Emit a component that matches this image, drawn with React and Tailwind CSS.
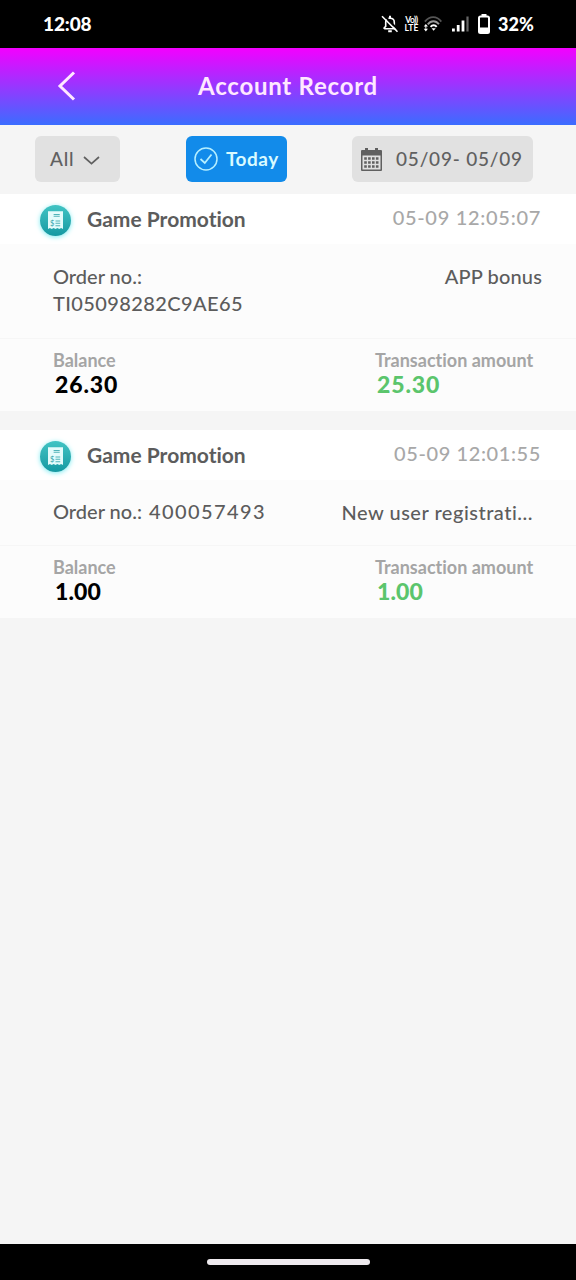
import React from 'react';

const records = [
    {
        title: 'Game Promotion',
        time: '05-09 12:05:07',
        timeClass: 'tracking-[0.7px]',
        orderNo: 'TI05098282C9AE65',
        orderClass: 'block tracking-[0.4px]',
        rowClass: 'h-[95px] pr-[34px]',
        remark: 'APP bonus',
        remarkClass: 'tracking-[0.15px]',
        balance: '26.30',
        balanceClass: 'tracking-[0.9px]',
        amount: '25.30',
    },
    {
        title: 'Game Promotion',
        time: '05-09 12:01:55',
        timeClass: 'tracking-[0.6px]',
        orderNo: '400057493',
        orderClass: 'ml-0.5 tracking-[1.4px]',
        rowClass: 'h-[66px] pr-[43px]',
        remark: 'New user registrati...',
        remarkClass: 'tracking-[0.5px]',
        balance: '1.00',
        balanceClass: 'tracking-[0.1px]',
        amount: '1.00',
    },
];

function StatusBar() {
    return (
        <div className="flex h-12 shrink-0 items-center justify-between bg-black pl-[43px] pr-[42px] text-white">
            <span className="text-[19px] font-black leading-6 tracking-[-0.1px]">12:08</span>
            <div className="flex items-center">
                <svg className="h-[18px] w-[18px]" viewBox="0 0 18 18" fill="none" stroke="#fff" strokeWidth="1.6">
                    <path d="M3.2 14V12.8L4.7 11.4V7.2C4.7 5 6.3 3.3 9 3.3S13.3 5 13.3 7.2V11.4L15 13.7H3.2Z" />
                    <path d="M9 .8V3M7.2 16.2H10.8" strokeWidth="2" />
                    <path d="M2.8 .2L18 15.600" stroke="#000" strokeWidth="2" />
                    <path d="M1 1.2L16.5 16.8" />
                </svg>
                <div className="ml-[5px] flex w-[15px] flex-col items-center text-[8.5px] font-bold leading-[8px]">
                    <span className="tracking-[-0.6px]">Vo))</span>
                    <span className="tracking-[0.1px]">LTE</span>
                </div>
                <svg className="ml-1 h-[18px] w-[19px]" viewBox="0 0 20 18" fill="none" strokeWidth="2">
                    <path d="M2 6.500C7 .2 14.500 .2 19.300 6.500" stroke="#555" />
                    <path d="M5 9.300C8.500 5 13.500 5 16.800 9.300" stroke="#999" />
                    <path d="M8 12C9.800 9.800 12.700 9.800 14.400 12" stroke="#fff" />
                    <path d="M11.200 16L9 13.500H13.400Z" fill="#fff" />
                    <path d="M3 9L5.200 11.700H.800ZM3 17L5.200 14H.800Z" fill="#fff" />
                    <path d="M3 11V14" stroke="#fff" strokeWidth="1" />
                </svg>
                <svg className="ml-2.5 h-4 w-[17px]" viewBox="0 0 17 16" fill="#fff">
                    <rect x="0" y="12.500" width="2.800" height="3" />
                    <rect x="4.800" y="9" width="2.800" height="6.500" />
                    <rect x="9.600" y="4.500" width="2.800" height="11" />
                    <rect x="14.400" y="0.500" width="2.200" height="15" fill="#666" />
                </svg>
                <svg className="ml-[9px] h-5 w-3" viewBox="0 0 12 20">
                    <rect x="3.500" y="0" width="5" height="3" fill="#fff" />
                    <rect x="1" y="2.500" width="10" height="16.500" rx="1.500" fill="none" stroke="#fff" strokeWidth="2" />
                    <rect x="1" y="13.500" width="10" height="5.500" fill="#fff" />
                </svg>
                <span className="ml-2 text-[18px] font-black leading-6 tracking-[0.1px]">32%</span>
            </div>
        </div>
    );
}

function Header() {
    return (
        <div className="grid h-[77px] shrink-0 grid-cols-[1fr_auto_1fr] items-center bg-linear-to-b/srgb from-[#f400ff] to-[#3b6dff] text-[#ffe8ff]">
            <svg className="mb-0.5 ml-[57px] h-[30px] w-[19px]" viewBox="0 0 19 30" fill="none" stroke="currentColor" strokeWidth="3">
                <path d="M17 1.500L3 15L17 28.500" />
            </svg>
            <h1 className="pb-px text-[24px] font-bold leading-7 tracking-[0.75px]">Account Record</h1>
        </div>
    );
}

function Filters() {
    return (
        <div className="flex h-[69px] shrink-0 items-start justify-between pl-[35px] pr-[43px] pt-[11px] leading-none">
            <button className="flex h-[46px] w-[85px] items-center rounded-md bg-[#e1e1e1] pl-[15px] text-[19px] font-medium text-[#606060]">
                <span className="w-[33px] pb-0.5 text-left tracking-[0.8px]">All</span>
                <svg className="mt-0.5 h-[9px] w-[17px]" viewBox="0 0 17 9" fill="none" stroke="currentColor" strokeWidth="1.700">
                    <path d="M1 1L8.500 7.600L16 1" />
                </svg>
            </button>
            <button className="ml-px flex h-[46px] w-[101px] items-center rounded-md bg-[#128bea] pl-2 text-[19px] font-bold text-[#d9faff]">
                <svg className="h-6 w-6 shrink-0" viewBox="0 0 24 24" fill="none" stroke="#b5efff" strokeWidth="1.500">
                    <circle cx="12" cy="12" r="11" />
                    <path d="M6.500 12L10.800 16L17.500 7.500" strokeWidth="1.800" />
                </svg>
                <span className="ml-2 pb-0.5 tracking-[0.5px]">Today</span>
            </button>
            <button className="flex h-[46px] w-[181px] items-center rounded-md bg-[#e1e1e1] pl-[9px] text-[19px] font-medium text-[#606060]">
                <svg className="h-6 w-[21px] shrink-0" viewBox="0 0 21 24" fill="currentColor">
                    <path
                        fillRule="evenodd"
                        d="M1 3H4V1H7V3H14V1H17V3H20Q21 3 21 4V23Q21 24 20 24H1Q0 24 0 23V4Q0 3 1 3ZM1.500 8.500V22.500H19.500V8.500Z"
                    />
                    <path d="M3.200 11.500H18M3.200 15.500H18M3.200 19.500H18" stroke="currentColor" strokeWidth="2.500" strokeDasharray="2.600 1.300" />
                </svg>
                <span className="ml-3.5 whitespace-nowrap pb-0.5 tracking-[0.8px]">05/09- 05/09</span>
            </button>
        </div>
    );
}

function ReceiptIcon() {
    return (
        <div className="mt-0.5 flex h-[31px] w-[31px] items-center justify-center rounded-full bg-linear-to-b from-[#40c4c4] to-[#1399a2] shadow-[0_1px_5px_#7cecf2]">
            <svg className="h-[19px] w-[15px]" viewBox="0 0 16 20">
                <path d="M0 0H16V19L14 18L12 19L10 18L8 19L6 18L4 19L2 18L0 19Z" fill="#e4fbfb" />
                <path d="M6 3.500H12.500M6 5.500H12.500M8 10.500H13M8 13H13M8 15.500H13" stroke="#4fb3b8" strokeWidth="1.100" />
                <text x="2" y="15.500" fontSize="8" fill="#35a3aa" fontFamily="Lato, sans-serif">$</text>
            </svg>
        </div>
    );
}

function RecordCard(props) {
    const { title, time, timeClass, orderNo, orderClass, rowClass, remark, remarkClass, balance, balanceClass, amount } = props;

    return (
        <div className="bg-[#fcfcfc] text-[#5c5c5c]">
            <div className="flex h-[50px] items-center bg-white pl-10 pr-[35px]">
                <ReceiptIcon />
                <span className="ml-4 pb-px text-[21px] font-bold leading-6">{title}</span>
                <span className={`ml-auto pb-1 text-xl font-medium leading-6 text-[#a8a8a8] ${timeClass}`}>{time}</span>
            </div>
            <div className={`flex items-center justify-between border-b border-[#f6f6f6] pl-[53px] text-xl font-medium leading-[27px] ${rowClass}`}>
                <div className="pb-0.5">
                    <span>Order no.: </span>
                    <span className={orderClass}>{orderNo}</span>
                </div>
                <span className={`self-start pt-[19px] ${remarkClass}`}>{remark}</span>
            </div>
            <div className="flex h-[72px] justify-between pl-[53px] pr-[42px] pt-2.5">
                <div>
                    <p className="text-lg font-bold leading-[22px] text-[#a5a5a5]">Balance</p>
                    <p className={`ml-0.5 text-[23px] font-black leading-[26px] text-black ${balanceClass}`}>{balance}</p>
                </div>
                <div className="w-[159px]">
                    <p className="whitespace-nowrap text-lg font-bold leading-[22px] text-[#a5a5a5]">Transaction amount</p>
                    <p className={`ml-0.5 text-[23px] font-black leading-[26px] text-[#5bc56c] ${balanceClass}`}>{amount}</p>
                </div>
            </div>
        </div>
    );
}

function App() {
    return (
        <div className="flex h-[1280px] w-[576px] flex-col bg-[#f5f5f5] font-['Lato',sans-serif] [font-variant-ligatures:none]">
            <StatusBar />
            <Header />
            <Filters />
            <div className="flex flex-1 flex-col gap-[19px]">
                {records.map((record) => (
                    <RecordCard key={record.time} {...record} />
                ))}
            </div>
            <div className="flex h-9 shrink-0 items-center justify-center bg-black">
                <div className="h-1.5 w-[163px] rounded-full bg-[#eeeaee]" />
            </div>
        </div>
    );
}

export default App;
